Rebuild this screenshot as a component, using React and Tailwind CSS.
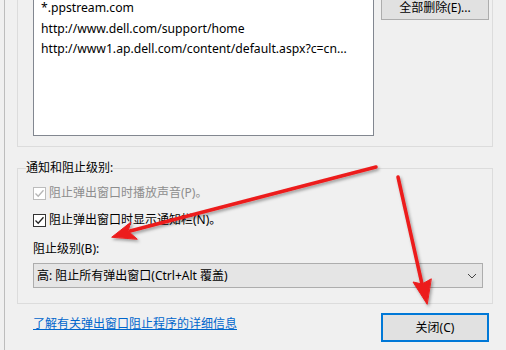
import React from 'react';

const sites = [
  '*.ppstream.com',
  'http://www.dell.com/support/home',
  'http://www1.ap.dell.com/content/default.aspx?c=cn...',
];

function Check({ disabled }) {
  return (
    <span
      className={`flex h-[13px] w-[13px] shrink-0 items-center justify-center border bg-white ${
        disabled ? 'border-[#bcbcbc]' : 'border-[#333333]'
      }`}
    >
      <svg width="11" height="11" viewBox="0 0 11 11">
        <path
          d="M1.5 5.5 L4.2 8.2 L9.5 2.2"
          fill="none"
          stroke={disabled ? '#b5b5b5' : '#222222'}
          strokeWidth="1.3"
        />
      </svg>
    </span>
  );
}

function Arrows() {
  return (
    <svg className="pointer-events-none absolute left-0 top-0" width="506" height="350" viewBox="0 0 506 350">
      <defs>
        <filter id="sh" x="-20%" y="-20%" width="140%" height="140%">
          <feDropShadow dx="1.5" dy="2" stdDeviation="1.5" floodColor="#000" floodOpacity="0.35" />
        </filter>
      </defs>
      <g filter="url(#sh)" fill="#ec1c1c" stroke="#ec1c1c" strokeLinecap="round">
        <line x1="376" y1="167" x2="130" y2="231" strokeWidth="3.5" />
        <polygon points="112,237 131,222 128,231 137,239" strokeWidth="1" strokeLinejoin="round" />
        <line x1="398" y1="177" x2="422" y2="284" strokeWidth="3.5" />
        <polygon points="427,304 413,282 422,284 431,279" strokeWidth="1" strokeLinejoin="round" />
      </g>
    </svg>
  );
}

export default function App() {
  return (
    <div className="relative flex h-[350px] w-[506px] overflow-hidden bg-[#f0f0f0] pl-[4px] font-['Noto_Sans','Noto_Sans_CJK_SC',sans-serif] text-[12px] text-black">
      <div className="flex flex-1 flex-col border-l border-[#bdbdbd] pl-[12px]">
        <div className="flex h-[147px] w-[476px] border-x border-b border-[#dcdcdc] pl-[15px]">
          <div className="h-[136px] w-[341px] border-x border-b border-[#828790] bg-white pl-[7px]">
            <div className="-mt-[2px] text-[12.2px] leading-[20.5px]">
              {sites.map((s) => (
                <div key={s}>{s}</div>
              ))}
            </div>
          </div>
          <div className="ml-[7px] flex h-[20px] w-[108px] items-center justify-center border-x border-b border-[#adadad] bg-[#e1e1e1] pb-[4px] leading-[16px]">
            全部删除(E)...
          </div>
        </div>

        <fieldset className="mt-[13px] w-[476px] border border-[#dcdcdc] pb-[15px] pl-[15px] pr-[9px]">
          <legend className="-ml-[7px] px-0 leading-[16px]">通知和阻止级别:</legend>
          <div className="mt-[9px] flex h-[16px] items-center gap-[3px] text-[#8d8d8d]">
            <Check disabled />
            <span>阻止弹出窗口时播放声音(P)。</span>
          </div>
          <div className="mt-[11px] flex h-[16px] items-center gap-[3px]">
            <Check />
            <span>阻止弹出窗口时显示通知栏(N)。</span>
          </div>
          <div className="mt-[13px] h-[16px] leading-[16px]">阻止级别(B):</div>
          <div className="mt-[6px] flex h-[25px] w-[450px] items-center justify-between border border-[#adadad] bg-[#e5e5e5] pl-[3px] pr-[5px]">
            <span>高: 阻止所有弹出窗口(Ctrl+Alt 覆盖)</span>
            <svg width="10" height="6" viewBox="0 0 10 6">
              <path d="M1 1 L5 5 L9 1" fill="none" stroke="#444" strokeWidth="1" />
            </svg>
          </div>
        </fieldset>

        <div className="mt-[9px] flex w-[476px] items-start justify-between pl-[16px] pr-[4px]">
          <a className="mt-[3px] leading-[16px] text-[#0066cc] underline">了解有关弹出窗口阻止程序的详细信息</a>
          <div className="flex h-[29px] w-[108px] items-center justify-center border-2 border-[#0078d7] bg-[#e1e1e1]">
            关闭(C)
          </div>
        </div>
      </div>
      <Arrows />
    </div>
  );
}
